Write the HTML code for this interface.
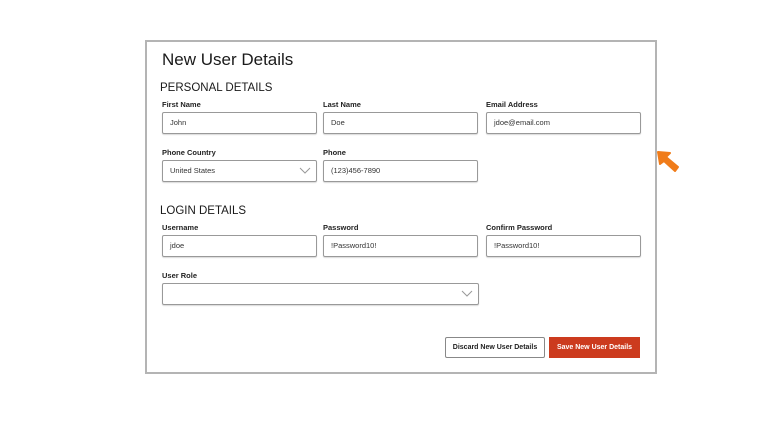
<!DOCTYPE html>
<html><head><style>
*{box-sizing:border-box;margin:0;padding:0}
body{width:768px;height:432px;background:#fff;font-family:"Liberation Sans",sans-serif;position:relative;overflow:hidden;color:#222}
.panel{position:absolute;left:145px;top:40px;width:512px;height:334px;border:2px solid #b4b4b4}
.a{position:absolute;white-space:nowrap}
.t{font-size:17px;left:162px;top:50px;color:#1a1a1a}
.h{font-size:11.5px;color:#1a1a1a}
.l{font-size:7.5px;font-weight:bold;color:#222}
.i{position:absolute;height:22px;border:1px solid #999;border-radius:2px;box-shadow:0 1px 1px rgba(0,0,0,.15);font-size:7.5px;padding-left:7px;line-height:20px;color:#333}
.chev{position:absolute;right:5px;top:6px;width:12px;height:8px}
.btn{position:absolute;height:21px;font-size:7px;font-weight:bold;text-align:center;line-height:19px}
</style></head><body>
<div class="panel"></div>
<div class="a t">New User Details</div>
<div class="a h" style="left:160px;top:82px">PERSONAL DETAILS</div>
<div class="a l" style="left:162px;top:100px">First Name</div>
<div class="a l" style="left:323px;top:100px">Last Name</div>
<div class="a l" style="left:486px;top:100px">Email Address</div>
<div class="i" style="left:162px;top:112px;width:155px">John</div>
<div class="i" style="left:323px;top:112px;width:155px">Doe</div>
<div class="i" style="left:486px;top:112px;width:155px">jdoe@email.com</div>
<div class="a l" style="left:162px;top:148px">Phone Country</div>
<div class="a l" style="left:323px;top:148px">Phone</div>
<div class="i" style="left:162px;top:160px;width:155px">United States<svg class="chev" viewBox="0 0 12 8"><path d="M1 1L6 6L11 1" fill="none" stroke="#999" stroke-width="1"/></svg></div>
<div class="i" style="left:323px;top:160px;width:155px">(123)456-7890</div>
<div class="a h" style="left:160px;top:205px">LOGIN DETAILS</div>
<div class="a l" style="left:162px;top:223px">Username</div>
<div class="a l" style="left:323px;top:223px">Password</div>
<div class="a l" style="left:486px;top:223px">Confirm Password</div>
<div class="i" style="left:162px;top:235px;width:155px">jdoe</div>
<div class="i" style="left:323px;top:235px;width:155px">!Password10!</div>
<div class="i" style="left:486px;top:235px;width:155px">!Password10!</div>
<div class="a l" style="left:162px;top:271px">User Role</div>
<div class="i" style="left:162px;top:283px;width:317px"><svg class="chev" viewBox="0 0 12 8"><path d="M1 1L6 6L11 1" fill="none" stroke="#999" stroke-width="1"/></svg></div>
<div class="btn" style="left:445px;top:337px;width:100px;border:1px solid #888;border-radius:2px;color:#222">Discard New User Details</div>
<div class="btn" style="left:549px;top:337px;width:91px;background:#cc3b1e;color:#fff;line-height:21px">Save New User Details</div>
<svg style="position:absolute;left:656px;top:150px" width="28" height="26" viewBox="0 0 28 26"><path d="M2 2L14 3L10 7L22 17L19 21L8 11L4 14Z" fill="#f07c1a" stroke="#f07c1a" stroke-width="2" stroke-linejoin="round"/></svg>
</body></html>
